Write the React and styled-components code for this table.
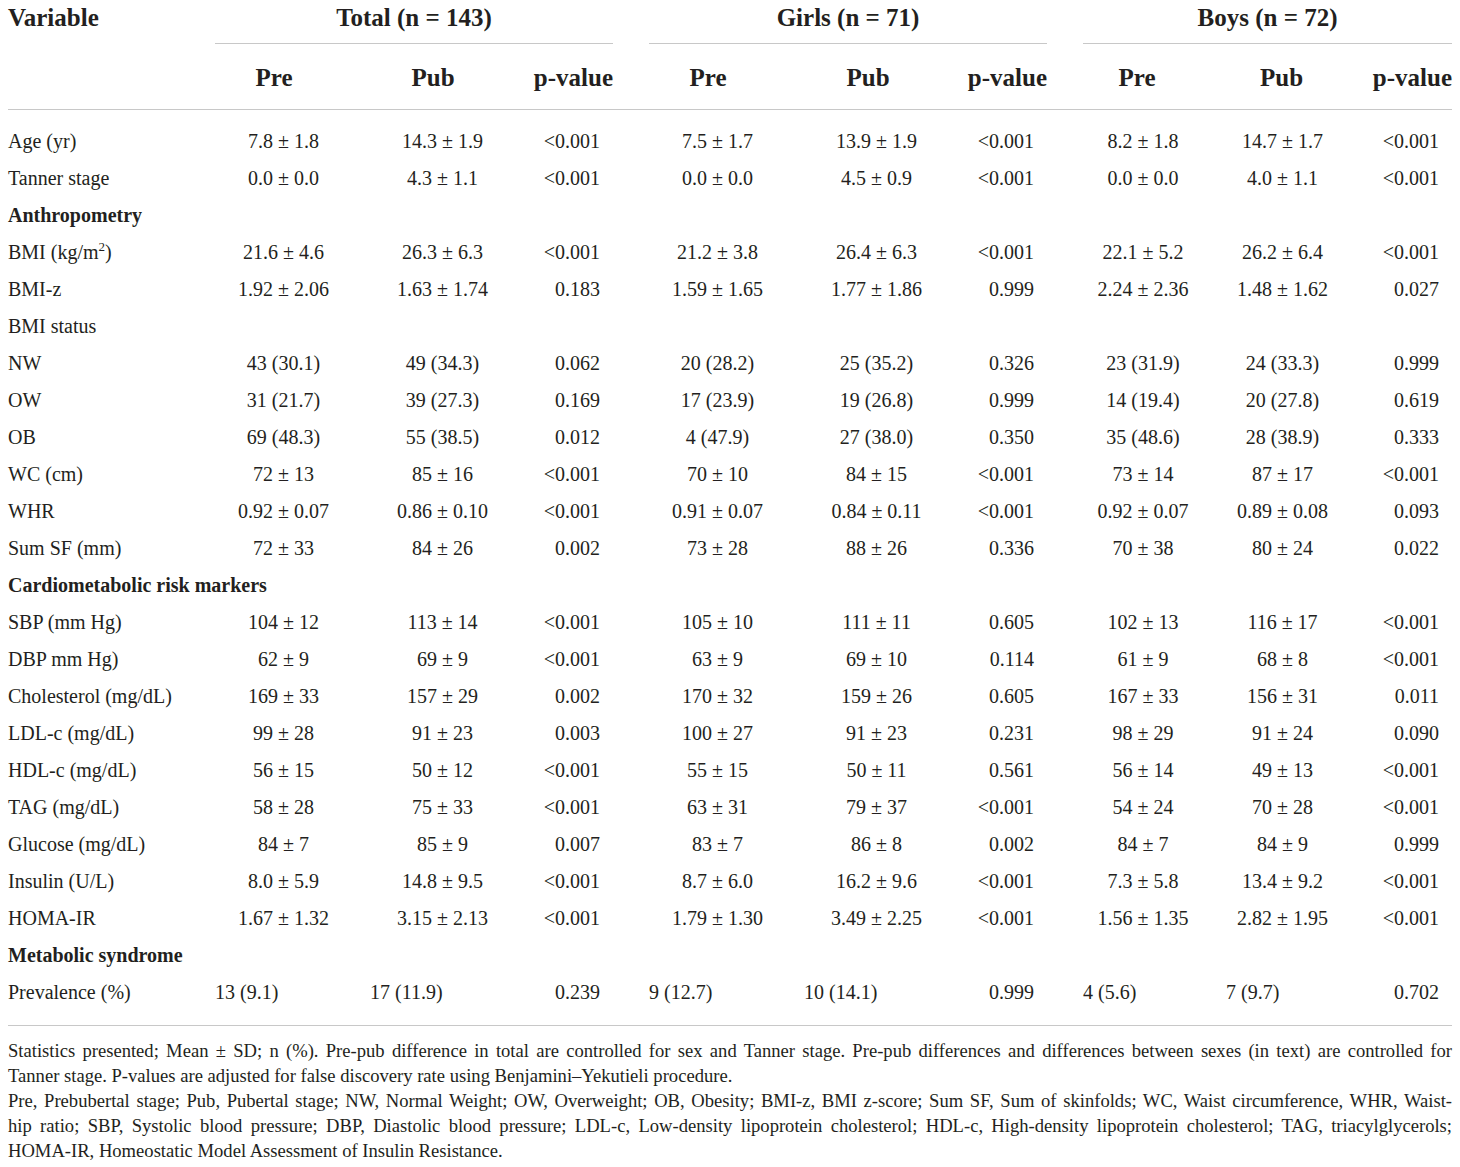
import React from "react";
import styled, { createGlobalStyle } from "styled-components";

const GlobalStyle = createGlobalStyle`
  body {
    margin: 0;
    background: #fff;
    color: #231f20;
    font-family: "Liberation Serif", "DejaVu Serif", serif;
  }
`;

const COLS = "207px 137px 181px 80px 36px 137px 181px 80px 36px 120px 159px 90px";

const Page = styled.div`
  width: 1444px;
  padding: 0 8px;
`;

// Header section
const HeadTop = styled.div`
  display: grid;
  grid-template-columns: 207px 398px 36px 398px 36px 369px;
  height: 44px;
`;

const VarTitle = styled.div`
  font-size: 25px;
  font-weight: bold;
  line-height: 36px;
`;

const GroupHead = styled.div`
  font-size: 25px;
  font-weight: bold;
  line-height: 36px;
  text-align: center;
  border-bottom: 1px solid #c8c8c8;
`;

const HeadSub = styled.div`
  display: grid;
  grid-template-columns: ${COLS};
  height: 65px;
  align-items: center;
  border-bottom: 1px solid #c8c8c8;
`;

const SubHead = styled.div`
  font-size: 25px;
  font-weight: bold;
  text-align: ${(p) => p.$align || "center"};
  padding-right: ${(p) => p.$nudge || 0}px;
  margin-top: 2px;
`;

// Body
const Body = styled.div`
  padding: 13px 0 14px;
  border-bottom: 1px solid #c8c8c8;
`;

const Row = styled.div`
  display: grid;
  grid-template-columns: ${COLS};
  height: 37px;
  align-items: center;
  font-size: 20px;
`;

const Label = styled.div`
  font-weight: ${(p) => (p.$section ? "bold" : "normal")};
  white-space: nowrap;
`;

const Cell = styled.div`
  text-align: ${(p) => p.$align};
  padding-right: ${(p) => (p.$align === "right" ? 13 : 0)}px;
  text-indent: ${(p) => p.$indent || 0}px;
  white-space: nowrap;
`;

const Sup = styled.sup`
  font-size: 13px;
  line-height: 0;
`;

// Notes
const Notes = styled.div`
  padding-top: 12px;
  font-size: 18.6px;
  line-height: 25px;
`;

const NoteLine = styled.div`
  text-align: justify;
  text-align-last: ${(p) => (p.$last ? "left" : "justify")};
`;

const rows = [
  { label: "Age (yr)", v: ["7.8 ± 1.8", "14.3 ± 1.9", "<0.001", "7.5 ± 1.7", "13.9 ± 1.9", "<0.001", "8.2 ± 1.8", "14.7 ± 1.7", "<0.001"] },
  { label: "Tanner stage", v: ["0.0 ± 0.0", "4.3 ± 1.1", "<0.001", "0.0 ± 0.0", "4.5 ± 0.9", "<0.001", "0.0 ± 0.0", "4.0 ± 1.1", "<0.001"] },
  { section: "Anthropometry" },
  { label: "BMI", unit: true, v: ["21.6 ± 4.6", "26.3 ± 6.3", "<0.001", "21.2 ± 3.8", "26.4 ± 6.3", "<0.001", "22.1 ± 5.2", "26.2 ± 6.4", "<0.001"] },
  { label: "BMI-z", v: ["1.92 ± 2.06", "1.63 ± 1.74", "0.183", "1.59 ± 1.65", "1.77 ± 1.86", "0.999", "2.24 ± 2.36", "1.48 ± 1.62", "0.027"] },
  { label: "BMI status" },
  { label: "NW", v: ["43 (30.1)", "49 (34.3)", "0.062", "20 (28.2)", "25 (35.2)", "0.326", "23 (31.9)", "24 (33.3)", "0.999"] },
  { label: "OW", v: ["31 (21.7)", "39 (27.3)", "0.169", "17 (23.9)", "19 (26.8)", "0.999", "14 (19.4)", "20 (27.8)", "0.619"] },
  { label: "OB", v: ["69 (48.3)", "55 (38.5)", "0.012", "4 (47.9)", "27 (38.0)", "0.350", "35 (48.6)", "28 (38.9)", "0.333"] },
  { label: "WC (cm)", v: ["72 ± 13", "85 ± 16", "<0.001", "70 ± 10", "84 ± 15", "<0.001", "73 ± 14", "87 ± 17", "<0.001"] },
  { label: "WHR", v: ["0.92 ± 0.07", "0.86 ± 0.10", "<0.001", "0.91 ± 0.07", "0.84 ± 0.11", "<0.001", "0.92 ± 0.07", "0.89 ± 0.08", "0.093"] },
  { label: "Sum SF (mm)", v: ["72 ± 33", "84 ± 26", "0.002", "73 ± 28", "88 ± 26", "0.336", "70 ± 38", "80 ± 24", "0.022"] },
  { section: "Cardiometabolic risk markers" },
  { label: "SBP (mm Hg)", v: ["104 ± 12", "113 ± 14", "<0.001", "105 ± 10", "111 ± 11", "0.605", "102 ± 13", "116 ± 17", "<0.001"] },
  { label: "DBP mm Hg)", v: ["62 ± 9", "69 ± 9", "<0.001", "63 ± 9", "69 ± 10", "0.114", "61 ± 9", "68 ± 8", "<0.001"] },
  { label: "Cholesterol (mg/dL)", v: ["169 ± 33", "157 ± 29", "0.002", "170 ± 32", "159 ± 26", "0.605", "167 ± 33", "156 ± 31", "0.011"] },
  { label: "LDL-c (mg/dL)", v: ["99 ± 28", "91 ± 23", "0.003", "100 ± 27", "91 ± 23", "0.231", "98 ± 29", "91 ± 24", "0.090"] },
  { label: "HDL-c (mg/dL)", v: ["56 ± 15", "50 ± 12", "<0.001", "55 ± 15", "50 ± 11", "0.561", "56 ± 14", "49 ± 13", "<0.001"] },
  { label: "TAG (mg/dL)", v: ["58 ± 28", "75 ± 33", "<0.001", "63 ± 31", "79 ± 37", "<0.001", "54 ± 24", "70 ± 28", "<0.001"] },
  { label: "Glucose (mg/dL)", v: ["84 ± 7", "85 ± 9", "0.007", "83 ± 7", "86 ± 8", "0.002", "84 ± 7", "84 ± 9", "0.999"] },
  { label: "Insulin (U/L)", v: ["8.0 ± 5.9", "14.8 ± 9.5", "<0.001", "8.7 ± 6.0", "16.2 ± 9.6", "<0.001", "7.3 ± 5.8", "13.4 ± 9.2", "<0.001"] },
  { label: "HOMA-IR", v: ["1.67 ± 1.32", "3.15 ± 2.13", "<0.001", "1.79 ± 1.30", "3.49 ± 2.25", "<0.001", "1.56 ± 1.35", "2.82 ± 1.95", "<0.001"] },
  { section: "Metabolic syndrome" },
  { label: "Prevalence (%)", plain: true, v: ["13 (9.1)", "17 (11.9)", "0.239", "9 (12.7)", "10 (14.1)", "0.999", "4 (5.6)", "7 (9.7)", "0.702"] },
];

// prevalence row is set flush-left in the pre/pub columns
const plainIndent = [0, 18, 0, 0, 18, 0, 0, 23, 0];

const ValueCells = ({ values, plain }) => {
  const out = [];
  values.forEach((val, i) => {
    if (i === 3 || i === 6) out.push(<div key={"gap" + i} />);
    const isP = i % 3 === 2;
    out.push(
      <Cell
        key={i}
        $align={isP ? "right" : plain ? "left" : "center"}
        $indent={plain ? plainIndent[i] : 0}
      >
        {val}
      </Cell>
    );
  });
  return out;
};

const groups = ["Total (n = 143)", "Girls (n = 71)", "Boys (n = 72)"];

const App = () => {
  return (
    <Page>
      <GlobalStyle />
      <HeadTop>
        <VarTitle>Variable</VarTitle>
        <GroupHead>{groups[0]}</GroupHead>
        <div />
        <GroupHead>{groups[1]}</GroupHead>
        <div />
        <GroupHead>{groups[2]}</GroupHead>
      </HeadTop>
      <HeadSub>
        <div />
        <SubHead $nudge={19}>Pre</SubHead>
        <SubHead $nudge={19}>Pub</SubHead>
        <SubHead $align="right">p-value</SubHead>
        <div />
        <SubHead $nudge={19}>Pre</SubHead>
        <SubHead $nudge={17}>Pub</SubHead>
        <SubHead $align="right">p-value</SubHead>
        <div />
        <SubHead $nudge={12}>Pre</SubHead>
        <SubHead $nudge={2}>Pub</SubHead>
        <SubHead $align="right">p-value</SubHead>
      </HeadSub>
      <Body>
        {rows.map((r, idx) => (
          <Row key={idx}>
            {r.section ? (
              <Label $section>{r.section}</Label>
            ) : (
              <Label>
                {r.label}
                {r.unit && (
                  <>
                    {" (kg/m"}
                    <Sup>2</Sup>
                    {")"}
                  </>
                )}
              </Label>
            )}
            {r.v && <ValueCells values={r.v} plain={r.plain} />}
          </Row>
        ))}
      </Body>
      <Notes>
        <NoteLine>
          Statistics presented; Mean ± SD; n (%). Pre-pub difference in total are controlled for sex and Tanner stage. Pre-pub differences and differences between sexes (in text) are controlled for
        </NoteLine>
        <NoteLine $last>
          Tanner stage. P-values are adjusted for false discovery rate using Benjamini–Yekutieli procedure.
        </NoteLine>
        <NoteLine>
          Pre, Prebubertal stage; Pub, Pubertal stage; NW, Normal Weight; OW, Overweight; OB, Obesity; BMI-z, BMI z-score; Sum SF, Sum of skinfolds; WC, Waist circumference, WHR, Waist-
        </NoteLine>
        <NoteLine>
          hip ratio; SBP, Systolic blood pressure; DBP, Diastolic blood pressure; LDL-c, Low-density lipoprotein cholesterol; HDL-c, High-density lipoprotein cholesterol; TAG, triacylglycerols;
        </NoteLine>
        <NoteLine $last>
          HOMA-IR, Homeostatic Model Assessment of Insulin Resistance.
        </NoteLine>
      </Notes>
    </Page>
  );
};

export default App;
